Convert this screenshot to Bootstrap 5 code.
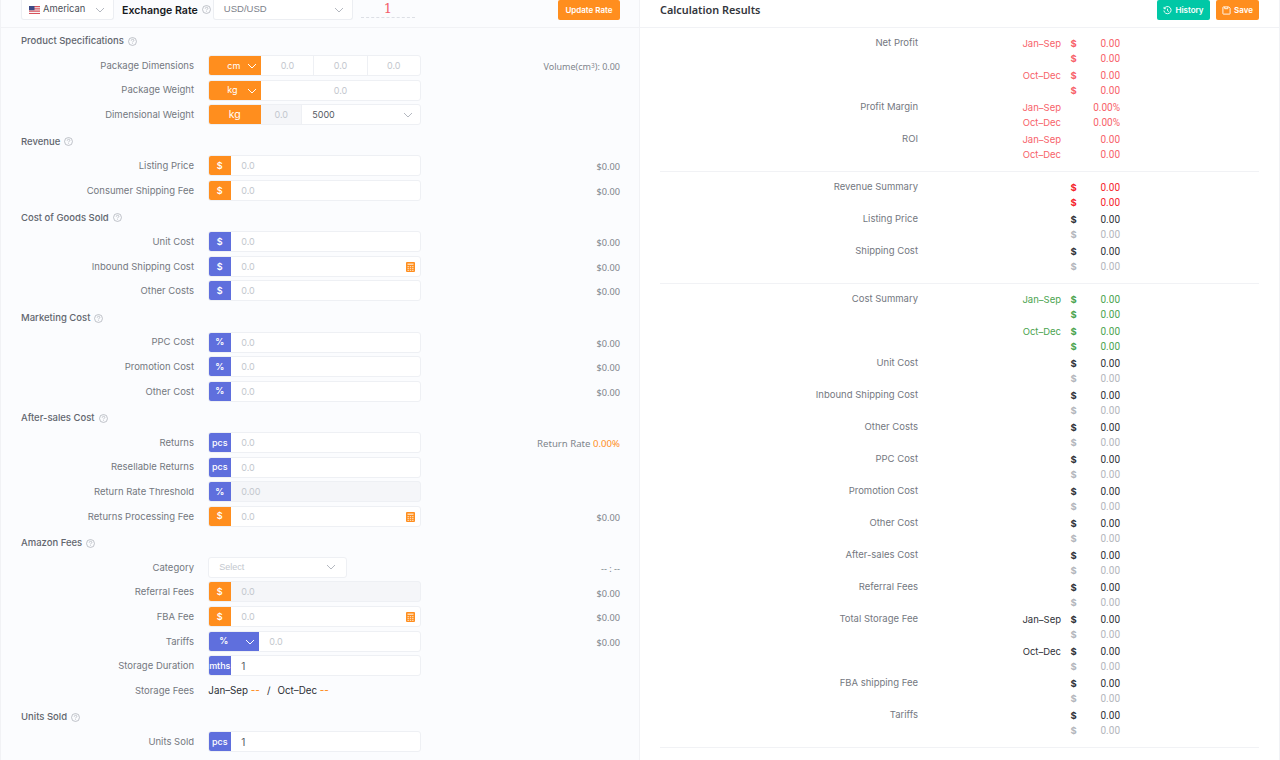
<!DOCTYPE html>
<html lang="en">
<head>
<meta charset="utf-8">
<title>Calculator</title>
<link rel="stylesheet" href="https://cdn.jsdelivr.net/npm/bootstrap@5.3.0/dist/css/bootstrap.min.css">
<style>
html,body{height:760px;overflow:hidden;background:#fff}
body{font-family:Inter,"Liberation Sans",sans-serif;font-size:9.5px;color:#74787f}
.calc-shell{height:760px;overflow:hidden}
.pane-left{width:640px;flex:none;background:#fbfcfe;border-left:1px solid #f1f2f5;border-right:1px solid #f1f2f5;padding:0 19px 0 20px}
.pane-right{flex:1;padding:0 20px 0 20px;border-right:1px solid #f1f2f5}
.top-bar{height:28px;margin:0 -20px;padding:0 20px 7px;border-bottom:1px solid #f1f2f5;overflow:hidden}
.top-select{height:20px;background:#fff;border:1px solid #eceef2;border-top:0;border-radius:0 0 3px 3px;padding:0 8px 0 7px;color:#4d5159;flex:none;font-size:9.4px}
.chev{width:10px;height:6px;flex:none;fill:none;stroke:#b4b8c0;stroke-width:1}
.chev-w{stroke:#fff}
.flag{width:11px;height:8px;margin-right:3px;flex:none}
.rate-title{font-weight:600;font-size:10.6px;color:#17191d;margin-left:8px;line-height:14px;margin-bottom:2.5px}
.help{width:9px;height:9px;flex:none;fill:none;stroke:#a9adb5;stroke-width:.8}
.help-top{margin:0 0 6px 4px}
.usd-sel{width:140px;margin-left:2px;font-family:"Liberation Sans",sans-serif;font-size:9.5px;color:#7d828b}
.usd-txt{padding-left:3px}
.rate-box{width:54px;height:18px;margin:0 0 2px 8px;border-bottom:1px dashed #dcdfe5;font-family:"DejaVu Serif",serif;font-size:13px;color:#f4606a;line-height:18px;text-align:center;flex:none}
.tool-btn{height:20px;border:0;border-radius:2px;color:#fff;font-size:8px;font-weight:600;padding:0;display:inline-flex;align-items:center;justify-content:center;gap:3px;flex:none;white-space:nowrap}
.btn-orange{background:#ff8e1e}.btn-orange:hover{background:#ff8e1e;color:#fff}
.btn-teal{background:#00c8a6}.btn-teal:hover{background:#00c8a6;color:#fff}
.btn-update{width:62px}.btn-history{width:53px}.btn-save{width:43px;margin-left:6px}
.tool-ico{width:9px;height:9px;fill:none;stroke:#fff;stroke-width:1;flex:none}
.sect-title{height:20px;margin-top:6.7px;margin-bottom:3.5px;gap:4px;font-weight:500;color:#62666e}
.first-sect{margin-top:3.5px;margin-bottom:3.5px}
.frow{height:21px;margin-bottom:3.6px}
.flabel{width:173px;flex:none;text-align:right;margin-right:14.3px;white-space:nowrap;padding-top:1px}
.fctl{width:212.5px;height:21px;flex:none;border:1px solid #eef0f4;border-radius:3px;background:#fff;overflow:hidden;position:relative}
.fval{flex:1;text-align:right;font-family:"Noto Sans",sans-serif;font-size:9.2px;color:#80858c;white-space:nowrap;padding-top:3px}
.fval-vol{font-size:9px}
.fval-rate{font-size:9.6px}
.fval sup{font-size:6.5px;top:-.4em}
.addon{width:23px;flex:none;height:21px;margin:-1px 0 -1px -1px;color:#fff;font-size:9px;font-weight:600;display:flex;align-items:center;justify-content:center;border-radius:3px 0 0 3px;white-space:nowrap}
.addon-txt{font-weight:500}
.addon-o{background:#ff8e1e}
.addon-b{background:#5f6fdd}
.addon-w{width:53px;justify-content:flex-start;padding-left:19px;position:relative;font-weight:400}
.addon-w .chev{position:absolute;right:4px;top:8px}
.addon-t{width:51px;padding-left:11px;font-weight:600}
.addon-c{justify-content:center;padding:0;font-size:10.5px}
.fin{flex:1;min-width:0;border:0;outline:0;background:transparent;height:19px;padding:0 10px;font:inherit;font-size:9px;color:#555a63}
.fin::placeholder{color:#c3c7ce;opacity:1}
.fin-c{text-align:center;padding:0}
.fin-d{border-left:1px solid #eef0f4}
.fin-off{background:#f5f6f9}
.fin-num{font-size:10px}
.calc-ico{position:absolute;right:5px;top:5px;width:9px;height:10px}
.dim-off{width:40px;flex:none;background:#f5f6f9;text-align:center;color:#c3c7ce;font-size:9px;line-height:19px;height:19px}
.dim-sel{flex:1;padding:0 7px 0 10px;color:#555a63;font-size:9px;border-left:1px solid #eef0f4}
.cat-sel{width:139px;padding:0 10px;color:#c3c7ce;font-family:"Liberation Sans",sans-serif;font-size:9px}
.store-text{color:#2c2f35;gap:7px;font-size:9.8px;padding-top:1px}
.dash{color:#ff8e1e;font-weight:500}
.val-o{color:#ff8e1e}
.rate-lab{color:#80858c}
.res-title{font-family:"Noto Sans",sans-serif;font-weight:600;font-size:10.85px;color:#33363c;line-height:14px;margin-bottom:3px}
.res-body{padding-top:7px}
.rgroup{margin-bottom:2px}
.rlabel{width:258px;flex:none;text-align:right;white-space:nowrap;line-height:15px}
.rlines{flex:none}
.rline{height:15px;line-height:15px;padding-top:1px}
.rper{width:143px;text-align:right;flex:none;white-space:nowrap}
.rdol{width:6px;margin-left:9.5px;font-weight:700;flex:none;text-align:center}
.rnum{width:43.5px;text-align:right;flex:none;white-space:nowrap;font-family:Roboto,sans-serif;font-size:10px}
.t-dark{color:#2f3238}
.t-grey{color:#b3b6bc}
.t-soft{color:#f7626a}
.t-red{color:#f5232b}
.t-green{color:#4ba44f}
.rdiv{height:1px;background:#f1f2f5;margin:10px 0 7px}
</style>
</head>
<body>
<svg width="0" height="0" class="d-none">
<symbol id="i-chev" viewBox="0 0 10 6"><path d="M1 1l4 4 4-4"/></symbol>
<symbol id="i-help" viewBox="0 0 10 10"><circle cx="5" cy="5" r="4.4"/><path d="M3.6 4c0-2 2.9-1.9 2.9-.2 0 1-1.5 1-1.5 2.2"/><path d="M5 7.1v.7"/></symbol>
<symbol id="i-calc" viewBox="0 0 9 10"><rect width="9" height="10" rx="1" fill="#ff8e1e"/><path d="M1.5 1.6h6v1.3h-6zM1.5 4h1.4v1.2H1.5zM3.8 4h1.4v1.2H3.8zM6.1 4h1.4v1.2H6.1zM1.5 6h1.4v1.2H1.5zM3.8 6h1.4v1.2H3.8zM6.1 6h1.4v1.2H6.1zM1.5 8h1.4v.9H1.5zM3.8 8h1.4v.9H3.8zM6.1 8h1.4v.9H6.1z" fill="#ffd9b0"/></symbol>
</svg>
<div class="calc-shell d-flex">
<section class="pane-left">
<div class="top-bar d-flex align-items-end">
<div class="top-select d-flex align-items-center" style="width:93px">
<svg class="flag" viewBox="0 0 11 8"><rect width="11" height="8" fill="#f6f6f6"/><path d="M0 0h11v1.200H0zM0 2.300h11v1.200H0zM0 4.600h11v1.200H0zM0 6.900h11V8H0z" fill="#d8525c"/><rect width="5.500" height="4.200" fill="#3c4a86"/></svg>
<span class="flex-grow-1">American</span><svg class="chev"><use href="#i-chev"/></svg></div>
<span class="rate-title">Exchange Rate</span>
<svg class="help help-top"><use href="#i-help"/></svg>
<div class="top-select usd-sel d-flex align-items-center"><span class="flex-grow-1 usd-txt">USD/USD</span><svg class="chev"><use href="#i-chev"/></svg></div>
<div class="rate-box">1</div>
<button class="btn tool-btn btn-orange btn-update ms-auto" type="button">Update Rate</button>
</div>

<div class="sect-title first-sect d-flex align-items-center">Product Specifications <svg class="help"><use href="#i-help"/></svg></div>
<div class="frow d-flex align-items-center"><span class="flabel">Package Dimensions</span><div class="fctl d-flex"><span class="addon addon-o addon-w">cm<svg class="chev chev-w"><use href="#i-chev"/></svg></span><input class="fin fin-c" placeholder="0.0"><input class="fin fin-c fin-d" placeholder="0.0"><input class="fin fin-c fin-d" placeholder="0.0"></div><span class="fval fval-vol">Volume(cm<sup>3</sup>): 0.00</span></div>
<div class="frow d-flex align-items-center"><span class="flabel">Package Weight</span><div class="fctl d-flex"><span class="addon addon-o addon-w">kg<svg class="chev chev-w"><use href="#i-chev"/></svg></span><input class="fin fin-c" placeholder="0.0"></div></div>
<div class="frow d-flex align-items-center"><span class="flabel">Dimensional Weight</span><div class="fctl d-flex"><span class="addon addon-o addon-w addon-c">kg</span><span class="dim-off">0.0</span><div class="dim-sel flex-grow-1 d-flex align-items-center"><span class="flex-grow-1">5000</span><svg class="chev"><use href="#i-chev"/></svg></div></div></div>

<div class="sect-title d-flex align-items-center">Revenue <svg class="help"><use href="#i-help"/></svg></div>
<div class="frow d-flex align-items-center"><span class="flabel">Listing Price</span><div class="fctl d-flex"><span class="addon addon-o">$</span><input class="fin" placeholder="0.0"></div><span class="fval">$0.00</span></div>
<div class="frow d-flex align-items-center"><span class="flabel">Consumer Shipping Fee</span><div class="fctl d-flex"><span class="addon addon-o">$</span><input class="fin" placeholder="0.0"></div><span class="fval">$0.00</span></div>

<div class="sect-title d-flex align-items-center">Cost of Goods Sold <svg class="help"><use href="#i-help"/></svg></div>
<div class="frow d-flex align-items-center"><span class="flabel">Unit Cost</span><div class="fctl d-flex"><span class="addon addon-b">$</span><input class="fin" placeholder="0.0"></div><span class="fval">$0.00</span></div>
<div class="frow d-flex align-items-center"><span class="flabel">Inbound Shipping Cost</span><div class="fctl d-flex"><span class="addon addon-b">$</span><input class="fin" placeholder="0.0"><svg class="calc-ico"><use href="#i-calc"/></svg></div><span class="fval">$0.00</span></div>
<div class="frow d-flex align-items-center"><span class="flabel">Other Costs</span><div class="fctl d-flex"><span class="addon addon-b">$</span><input class="fin" placeholder="0.0"></div><span class="fval">$0.00</span></div>

<div class="sect-title d-flex align-items-center">Marketing Cost <svg class="help"><use href="#i-help"/></svg></div>
<div class="frow d-flex align-items-center"><span class="flabel">PPC Cost</span><div class="fctl d-flex"><span class="addon addon-b">%</span><input class="fin" placeholder="0.0"></div><span class="fval">$0.00</span></div>
<div class="frow d-flex align-items-center"><span class="flabel">Promotion Cost</span><div class="fctl d-flex"><span class="addon addon-b">%</span><input class="fin" placeholder="0.0"></div><span class="fval">$0.00</span></div>
<div class="frow d-flex align-items-center"><span class="flabel">Other Cost</span><div class="fctl d-flex"><span class="addon addon-b">%</span><input class="fin" placeholder="0.0"></div><span class="fval">$0.00</span></div>

<div class="sect-title d-flex align-items-center">After-sales Cost <svg class="help"><use href="#i-help"/></svg></div>
<div class="frow d-flex align-items-center"><span class="flabel">Returns</span><div class="fctl d-flex"><span class="addon addon-b addon-txt">pcs</span><input class="fin" placeholder="0.0"></div><span class="fval fval-rate"><span class="rate-lab">Return Rate</span> <span class="val-o">0.00%</span></span></div>
<div class="frow d-flex align-items-center"><span class="flabel">Resellable Returns</span><div class="fctl d-flex"><span class="addon addon-b addon-txt">pcs</span><input class="fin" placeholder="0.0"></div></div>
<div class="frow d-flex align-items-center"><span class="flabel">Return Rate Threshold</span><div class="fctl d-flex fin-off"><span class="addon addon-b">%</span><input class="fin" placeholder="0.00" disabled></div></div>
<div class="frow d-flex align-items-center"><span class="flabel">Returns Processing Fee</span><div class="fctl d-flex"><span class="addon addon-o">$</span><input class="fin" placeholder="0.0"><svg class="calc-ico"><use href="#i-calc"/></svg></div><span class="fval">$0.00</span></div>

<div class="sect-title d-flex align-items-center">Amazon Fees <svg class="help"><use href="#i-help"/></svg></div>
<div class="frow d-flex align-items-center"><span class="flabel">Category</span><div class="fctl cat-sel d-flex align-items-center"><span class="flex-grow-1">Select</span><svg class="chev"><use href="#i-chev"/></svg></div><span class="fval">-- : --</span></div>
<div class="frow d-flex align-items-center"><span class="flabel">Referral Fees</span><div class="fctl d-flex fin-off"><span class="addon addon-o">$</span><input class="fin" placeholder="0.0" disabled></div><span class="fval">$0.00</span></div>
<div class="frow d-flex align-items-center"><span class="flabel">FBA Fee</span><div class="fctl d-flex"><span class="addon addon-o">$</span><input class="fin" placeholder="0.0"><svg class="calc-ico"><use href="#i-calc"/></svg></div><span class="fval">$0.00</span></div>
<div class="frow d-flex align-items-center"><span class="flabel">Tariffs</span><div class="fctl d-flex"><span class="addon addon-b addon-w addon-t">%<svg class="chev chev-w"><use href="#i-chev"/></svg></span><input class="fin" placeholder="0.0"></div><span class="fval">$0.00</span></div>
<div class="frow d-flex align-items-center"><span class="flabel">Storage Duration</span><div class="fctl d-flex"><span class="addon addon-b addon-txt">mths</span><input class="fin fin-num" value="1"></div></div>
<div class="frow d-flex align-items-center"><span class="flabel">Storage Fees</span><span class="store-text d-flex"><span>Jan–Sep <span class="dash">--</span></span><span>/</span><span>Oct–Dec <span class="dash">--</span></span></span></div>

<div class="sect-title d-flex align-items-center">Units Sold <svg class="help"><use href="#i-help"/></svg></div>
<div class="frow d-flex align-items-center"><span class="flabel">Units Sold</span><div class="fctl d-flex"><span class="addon addon-b addon-txt">pcs</span><input class="fin fin-num" value="1"></div></div>
</section>

<section class="pane-right">
<div class="top-bar d-flex align-items-end">
<span class="res-title me-auto">Calculation Results</span>
<button class="btn tool-btn btn-teal btn-history" type="button"><svg class="tool-ico" viewBox="0 0 10 10"><path d="M1.400 2.800A4 4 0 1 1 1 5M1.200 1v2h2M5 3v2.200l1.500 1"/></svg>History</button>
<button class="btn tool-btn btn-orange btn-save" type="button"><svg class="tool-ico" viewBox="0 0 10 10"><path d="M1 1.500a.5.5 0 0 1 .5-.5h6L9 2.500v6a.5.5 0 0 1-.5.5h-7a.5.5 0 0 1-.5-.5zM3 1v2h3.500V1"/></svg>Save</button>
</div>
<div class="res-body">
<div class="rgroup d-flex"><span class="rlabel">Net Profit</span><div class="rlines t-soft">
<div class="rline d-flex"><span class="rper">Jan–Sep</span><span class="rdol">$</span><span class="rnum">0.00</span></div>
<div class="rline d-flex"><span class="rper"></span><span class="rdol">$</span><span class="rnum">0.00</span></div>
</div></div>
<div class="rgroup d-flex"><span class="rlabel"></span><div class="rlines t-soft">
<div class="rline d-flex"><span class="rper">Oct–Dec</span><span class="rdol">$</span><span class="rnum">0.00</span></div>
<div class="rline d-flex"><span class="rper"></span><span class="rdol">$</span><span class="rnum">0.00</span></div>
</div></div>
<div class="rgroup d-flex"><span class="rlabel">Profit Margin</span><div class="rlines t-soft">
<div class="rline d-flex"><span class="rper">Jan–Sep</span><span class="rdol"></span><span class="rnum">0.00%</span></div>
<div class="rline d-flex"><span class="rper">Oct–Dec</span><span class="rdol"></span><span class="rnum">0.00%</span></div>
</div></div>
<div class="rgroup d-flex"><span class="rlabel">ROI</span><div class="rlines t-soft">
<div class="rline d-flex"><span class="rper">Jan–Sep</span><span class="rdol"></span><span class="rnum">0.00</span></div>
<div class="rline d-flex"><span class="rper">Oct–Dec</span><span class="rdol"></span><span class="rnum">0.00</span></div>
</div></div>
<div class="rdiv"></div>
<div class="rgroup d-flex"><span class="rlabel">Revenue Summary</span><div class="rlines t-red">
<div class="rline d-flex"><span class="rper"></span><span class="rdol">$</span><span class="rnum">0.00</span></div>
<div class="rline d-flex"><span class="rper"></span><span class="rdol">$</span><span class="rnum">0.00</span></div>
</div></div>
<div class="rgroup d-flex"><span class="rlabel">Listing Price</span><div class="rlines">
<div class="rline d-flex t-dark"><span class="rper"></span><span class="rdol">$</span><span class="rnum">0.00</span></div>
<div class="rline d-flex t-grey"><span class="rper"></span><span class="rdol">$</span><span class="rnum">0.00</span></div>
</div></div>
<div class="rgroup d-flex"><span class="rlabel">Shipping Cost</span><div class="rlines">
<div class="rline d-flex t-dark"><span class="rper"></span><span class="rdol">$</span><span class="rnum">0.00</span></div>
<div class="rline d-flex t-grey"><span class="rper"></span><span class="rdol">$</span><span class="rnum">0.00</span></div>
</div></div>
<div class="rdiv"></div>
<div class="rgroup d-flex"><span class="rlabel">Cost Summary</span><div class="rlines t-green">
<div class="rline d-flex"><span class="rper">Jan–Sep</span><span class="rdol">$</span><span class="rnum">0.00</span></div>
<div class="rline d-flex"><span class="rper"></span><span class="rdol">$</span><span class="rnum">0.00</span></div>
</div></div>
<div class="rgroup d-flex"><span class="rlabel"></span><div class="rlines t-green">
<div class="rline d-flex"><span class="rper">Oct–Dec</span><span class="rdol">$</span><span class="rnum">0.00</span></div>
<div class="rline d-flex"><span class="rper"></span><span class="rdol">$</span><span class="rnum">0.00</span></div>
</div></div>
<div class="rgroup d-flex"><span class="rlabel">Unit Cost</span><div class="rlines">
<div class="rline d-flex t-dark"><span class="rper"></span><span class="rdol">$</span><span class="rnum">0.00</span></div>
<div class="rline d-flex t-grey"><span class="rper"></span><span class="rdol">$</span><span class="rnum">0.00</span></div>
</div></div>
<div class="rgroup d-flex"><span class="rlabel">Inbound Shipping Cost</span><div class="rlines">
<div class="rline d-flex t-dark"><span class="rper"></span><span class="rdol">$</span><span class="rnum">0.00</span></div>
<div class="rline d-flex t-grey"><span class="rper"></span><span class="rdol">$</span><span class="rnum">0.00</span></div>
</div></div>
<div class="rgroup d-flex"><span class="rlabel">Other Costs</span><div class="rlines">
<div class="rline d-flex t-dark"><span class="rper"></span><span class="rdol">$</span><span class="rnum">0.00</span></div>
<div class="rline d-flex t-grey"><span class="rper"></span><span class="rdol">$</span><span class="rnum">0.00</span></div>
</div></div>
<div class="rgroup d-flex"><span class="rlabel">PPC Cost</span><div class="rlines">
<div class="rline d-flex t-dark"><span class="rper"></span><span class="rdol">$</span><span class="rnum">0.00</span></div>
<div class="rline d-flex t-grey"><span class="rper"></span><span class="rdol">$</span><span class="rnum">0.00</span></div>
</div></div>
<div class="rgroup d-flex"><span class="rlabel">Promotion Cost</span><div class="rlines">
<div class="rline d-flex t-dark"><span class="rper"></span><span class="rdol">$</span><span class="rnum">0.00</span></div>
<div class="rline d-flex t-grey"><span class="rper"></span><span class="rdol">$</span><span class="rnum">0.00</span></div>
</div></div>
<div class="rgroup d-flex"><span class="rlabel">Other Cost</span><div class="rlines">
<div class="rline d-flex t-dark"><span class="rper"></span><span class="rdol">$</span><span class="rnum">0.00</span></div>
<div class="rline d-flex t-grey"><span class="rper"></span><span class="rdol">$</span><span class="rnum">0.00</span></div>
</div></div>
<div class="rgroup d-flex"><span class="rlabel">After-sales Cost</span><div class="rlines">
<div class="rline d-flex t-dark"><span class="rper"></span><span class="rdol">$</span><span class="rnum">0.00</span></div>
<div class="rline d-flex t-grey"><span class="rper"></span><span class="rdol">$</span><span class="rnum">0.00</span></div>
</div></div>
<div class="rgroup d-flex"><span class="rlabel">Referral Fees</span><div class="rlines">
<div class="rline d-flex t-dark"><span class="rper"></span><span class="rdol">$</span><span class="rnum">0.00</span></div>
<div class="rline d-flex t-grey"><span class="rper"></span><span class="rdol">$</span><span class="rnum">0.00</span></div>
</div></div>
<div class="rgroup d-flex"><span class="rlabel">Total Storage Fee</span><div class="rlines">
<div class="rline d-flex t-dark"><span class="rper">Jan–Sep</span><span class="rdol">$</span><span class="rnum">0.00</span></div>
<div class="rline d-flex t-grey"><span class="rper"></span><span class="rdol">$</span><span class="rnum">0.00</span></div>
</div></div>
<div class="rgroup d-flex"><span class="rlabel"></span><div class="rlines">
<div class="rline d-flex t-dark"><span class="rper">Oct–Dec</span><span class="rdol">$</span><span class="rnum">0.00</span></div>
<div class="rline d-flex t-grey"><span class="rper"></span><span class="rdol">$</span><span class="rnum">0.00</span></div>
</div></div>
<div class="rgroup d-flex"><span class="rlabel">FBA shipping Fee</span><div class="rlines">
<div class="rline d-flex t-dark"><span class="rper"></span><span class="rdol">$</span><span class="rnum">0.00</span></div>
<div class="rline d-flex t-grey"><span class="rper"></span><span class="rdol">$</span><span class="rnum">0.00</span></div>
</div></div>
<div class="rgroup d-flex"><span class="rlabel">Tariffs</span><div class="rlines">
<div class="rline d-flex t-dark"><span class="rper"></span><span class="rdol">$</span><span class="rnum">0.00</span></div>
<div class="rline d-flex t-grey"><span class="rper"></span><span class="rdol">$</span><span class="rnum">0.00</span></div>
</div></div>
<div class="rdiv"></div>
</div>
</section>
</div>
<script src="https://cdn.jsdelivr.net/npm/bootstrap@5.3.0/dist/js/bootstrap.bundle.min.js"></script>
</body>
</html>
